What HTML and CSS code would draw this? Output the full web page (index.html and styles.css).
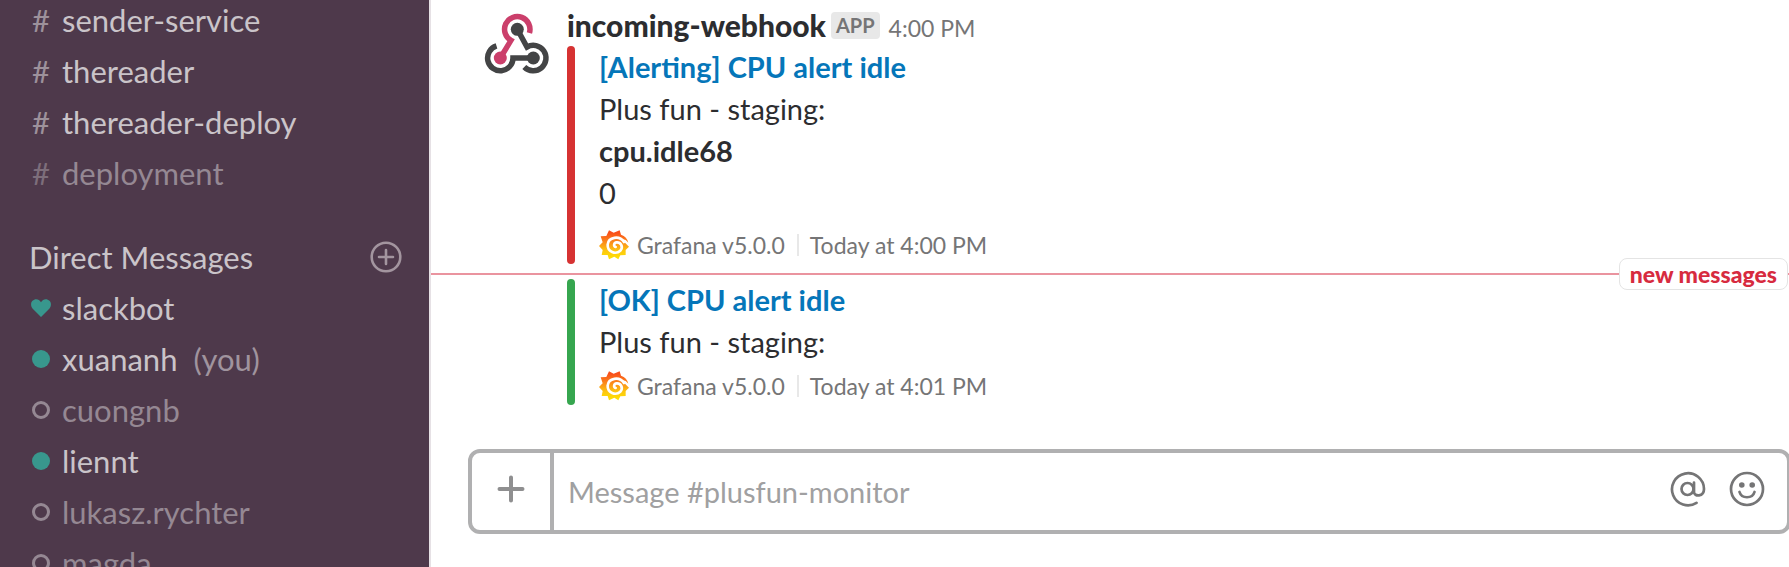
FILE: index.html
```html
<!DOCTYPE html>
<html lang="en">
<head>
<meta charset="utf-8">
<meta name="viewport" content="width=device-width, initial-scale=1">
<title>plusfun-monitor</title>
<link rel="stylesheet" href="styles.css">
</head>
<body>
<svg class="defs" aria-hidden="true">
  <defs>
    <linearGradient id="flame" gradientUnits="userSpaceOnUse" x1="0" y1="0" x2="0" y2="90">
      <stop offset=".1" stop-color="#f9501a"/>
      <stop offset=".4" stop-color="#fb8a1a"/>
      <stop offset=".7" stop-color="#fdc80f"/>
      <stop offset="1" stop-color="#ffe600"/>
    </linearGradient>
    <symbol id="grafana" viewBox="0 0 90 90">
      <path fill="url(#flame)" d="M30 1L44 8L62 1L66 14Q84 20 88 38Q80 28 72 28L78 38L90 50L80 60L80 75L64 76L58 88L46 80L30 88L26 75L8 75L11 60L0 48L11 37L5 19L22 18Z"/>
      <path fill="none" stroke="#fff" stroke-width="8" stroke-linecap="round" d="M75 36C62 16 28 20 26 44C25 66 50 75 64 62C74 50 65 36 53 37C44 38 43 49 50 51"/>
    </symbol>
  </defs>
</svg>
<div class="app">
  <nav class="sidebar" aria-label="Channels and direct messages">
    <ul class="list channels">
      <li><a class="row" href="#"><span class="mark">#</span>sender-service</a></li>
      <li><a class="row" href="#"><span class="mark">#</span>thereader</a></li>
      <li><a class="row" href="#"><span class="mark">#</span>thereader-deploy</a></li>
      <li><a class="row muted" href="#"><span class="mark">#</span>deployment</a></li>
    </ul>
    <div class="section">
      <h2 class="section-title">Direct Messages</h2>
      <button class="icon-button" type="button" aria-label="New direct message">
        <svg width="32" height="32" viewBox="0 0 32 32" fill="none" stroke="#a3959f" stroke-width="2.600" stroke-linecap="round"><circle cx="16" cy="16" r="14.300"/><path d="M16 9v14M9 16h14"/></svg>
      </button>
    </div>
    <ul class="list">
      <li><a class="row" href="#"><span class="mark"><svg width="20" height="18" viewBox="0 0 20 18"><path fill="#38978d" d="M10 18L1.500 9.500C-.5 7-.3 3.500 1.500 1.800 4-.6 8-.3 10 3.200 12-.3 16-.6 18.500 1.800c1.800 1.700 2 5.200 0 7.700z"/></svg></span>slackbot</a></li>
      <li><a class="row" href="#"><span class="mark"><span class="presence online"></span></span>xuananh<span class="you">(you)</span></a></li>
      <li><a class="row muted" href="#"><span class="mark"><span class="presence"></span></span>cuongnb</a></li>
      <li><a class="row" href="#"><span class="mark"><span class="presence online"></span></span>liennt</a></li>
      <li><a class="row muted" href="#"><span class="mark"><span class="presence"></span></span>lukasz.rychter</a></li>
      <li><a class="row muted" href="#"><span class="mark"><span class="presence"></span></span>magda</a></li>
    </ul>
  </nav>

  <main class="main">
    <div class="messages">
      <article class="message">
        <svg class="avatar" viewBox="0 0 72 72" fill="none" stroke-width="5.500">
          <g stroke="#434445">
            <path d="M15.500 43.900A12.700 12.700 0 1 0 32 56H52"/>
            <path d="M36.300 27.300L46 45A12.700 12.700 0 1 1 43.300 65"/>
          </g>
          <path stroke="#cb3f6b" d="M48.400 31A12.700 12.700 0 1 0 30 38.300L19.300 56"/>
          <circle cx="36.300" cy="27.300" r="6.500" fill="#434445"/>
          <circle cx="52.300" cy="56" r="6.500" fill="#434445"/>
          <circle cx="19.300" cy="56" r="6.500" fill="#cb3f6b"/>
        </svg>
        <div class="body">
          <header class="head">
            <span class="author">incoming-webhook</span>
            <span class="app-badge">APP</span>
            <time class="time">4:00 PM</time>
          </header>
          <section class="attachment alerting">
            <a class="title" href="#">[Alerting] CPU alert idle</a>
            <p class="text">Plus fun - staging:</p>
            <dl class="fields"><dt>cpu.idle68</dt><dd>0</dd></dl>
            <footer class="foot"><svg class="logo"><use href="#grafana"/></svg><span>Grafana v5.0.0</span><time class="stamp">Today at 4:00 PM</time></footer>
          </section>
        </div>
      </article>
      <div class="divider"><span class="divider-label">new messages</span></div>
      <article class="message">
        <div class="avatar"></div>
        <div class="body">
          <section class="attachment ok">
            <a class="title" href="#">[OK] CPU alert idle</a>
            <p class="text">Plus fun - staging:</p>
            <footer class="foot"><svg class="logo"><use href="#grafana"/></svg><span>Grafana v5.0.0</span><time class="stamp">Today at 4:01 PM</time></footer>
          </section>
        </div>
      </article>
    </div>
    <form class="composer">
      <button class="attach" type="button" aria-label="Add file">
        <svg width="28" height="28" viewBox="0 0 28 28" fill="none" stroke="#8f8f90" stroke-width="4" stroke-linecap="round"><path d="M14 2.500v23M2.500 14h23"/></svg>
      </button>
      <input class="entry" type="text" aria-label="Message #plusfun-monitor" placeholder="Message #plusfun-monitor">
      <div class="tools">
        <button class="icon-button" type="button" aria-label="Mention someone">
          <svg width="36" height="36" viewBox="0 0 36 36" fill="none" stroke="#757576" stroke-width="2.700" stroke-linecap="round"><circle cx="17.500" cy="18" r="6"/><path d="M24 11.500v9.500c0 5 10 5 10-3a16 16 0 1 0-7.500 13.800"/></svg>
        </button>
        <button class="icon-button" type="button" aria-label="Insert emoji">
          <svg width="36" height="36" viewBox="0 0 36 36" fill="none" stroke="#757576" stroke-width="2.700" stroke-linecap="round"><circle cx="18" cy="18" r="16"/><path d="M10.500 21c2 7 13 7 15 0"/><g fill="#757576" stroke="none"><circle cx="12.800" cy="14" r="2.800"/><circle cx="23.200" cy="14" r="2.800"/></g></svg>
        </button>
      </div>
    </form>
  </main>
</div>
</body>
</html>
```
FILE: styles.css
```css
* { box-sizing: border-box; }
body {
  margin: 0;
  font-family: Lato, "Liberation Sans", sans-serif;
  color: #2c2d30;
  background: #fff;
  overflow: hidden;
}
button { padding: 0; border: 0; background: none; font: inherit; cursor: pointer; }
a { text-decoration: none; }
svg { display: block; }
.defs { position: absolute; width: 0; height: 0; }
.app { display: flex; height: 100vh; overflow: hidden; }

.sidebar {
  flex: 0 0 431px;
  overflow: hidden;
  background: #4e394b;
  border-right: 2px solid #e6e1e5;
  color: #cac4c9;
  font-size: 31px;
}
.list { margin: 0; padding: 0; list-style: none; }
.channels { margin-top: -6px; }
.row {
  display: flex;
  align-items: center;
  height: 51px;
  padding-left: 30px;
  color: #cac4c9;
}
.mark {
  display: flex;
  justify-content: center;
  width: 22px;
  margin-right: 10px;
  color: #9d919b;
}
.muted { color: #958893; }
.muted .mark { color: #7d6e7b; }
.presence { width: 18px; height: 18px; border: 3px solid #958893; border-radius: 50%; }
.presence.online { border: 0; background: #38978d; }
.you { margin-left: 16px; color: #a0949e; }
.section {
  display: flex;
  align-items: center;
  justify-content: space-between;
  height: 51px;
  margin-top: 33px;
  padding: 0 27px 0 29px;
}
.section-title { margin: 0; font-size: 31px; font-weight: 400; }

.main { flex: 1; min-width: 0; display: flex; flex-direction: column; }
.messages { flex: 1; padding-top: 2px; }
.message { display: flex; padding-left: 50px; }
.avatar { flex: 0 0 72px; height: 72px; margin-right: 14px; }
.body { flex: 1; min-width: 0; }
.head {
  display: flex;
  align-items: baseline;
  height: 44px;
  padding-top: 2px;
  line-height: 42px;
}
.author { font-size: 30px; font-weight: 900; }
.app-badge {
  align-self: center;
  margin: 0 9px 0 5px;
  padding: 0 5px;
  border-radius: 4px;
  background: #e8e8e8;
  color: #757576;
  font-size: 20px;
  font-weight: 700;
  line-height: 27px;
}
.time { font-size: 23px; color: #757576; }
.attachment {
  position: relative;
  padding: 0 0 3px 32px;
  font-size: 29px;
  line-height: 42px;
}
.attachment::before {
  content: "";
  position: absolute;
  inset: 0 auto 0 0;
  width: 8px;
  border-radius: 4px;
}
.alerting::before { background: #d63232; }
.ok::before { background: #36a64f; }
.title { display: block; width: fit-content; color: #0576b9; font-weight: 700; }
.text { margin: 0; }
.fields { margin: 0 0 8px; }
.fields dt { font-weight: 700; }
.fields dd { margin: 0; }
.foot {
  display: flex;
  align-items: center;
  margin-top: 7px;
  font-size: 23px;
  line-height: 32px;
  color: #757576;
}
.alerting .foot { margin-top: 15px; }
.logo { width: 30px; height: 30px; margin-right: 8px; }
.stamp { display: flex; align-items: center; }
.stamp::before {
  content: "";
  width: 2px;
  height: 22px;
  margin: 0 11px 0 12px;
  background: #e8e8e8;
}
.divider { position: relative; height: 2px; margin: 9px 0 4px; background: #ea949f; }
.divider-label {
  position: absolute;
  z-index: 1;
  top: -15px;
  right: 1px;
  padding: 0 10px;
  border: 1px solid #e4e4e4;
  border-radius: 8px;
  background: #fff;
  color: #d72b3f;
  font-size: 23px;
  font-weight: 900;
  line-height: 30px;
}

.composer {
  display: flex;
  height: 85px;
  margin: 0 -2px 33px 37px;
  border: 4px solid #b0b0b1;
  border-radius: 12px;
}
.attach {
  display: flex;
  align-items: center;
  justify-content: center;
  width: 82px;
  padding-bottom: 6px;
  border-right: 4px solid #b0b0b1;
}
.entry {
  flex: 1;
  min-width: 0;
  padding: 0 14px;
  border: 0;
  outline: 0;
  background: none;
  font: inherit;
  font-size: 29px;
}
.entry::placeholder { color: #a0a0a1; opacity: 1; }
.tools { display: flex; align-items: center; gap: 23px; padding: 0 22px 6px 0; }
```
